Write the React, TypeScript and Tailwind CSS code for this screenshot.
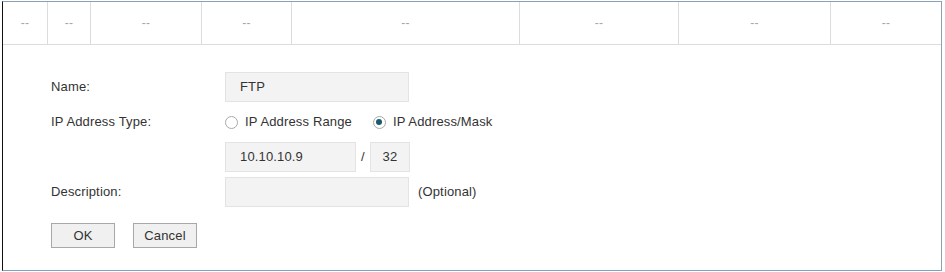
import React from 'react';

const columns = ['--', '--', '--', '--', '--', '--', '--', '--'];

function Radio({ checked, label }: { checked?: boolean; label: string }) {
  return (
    <label className="flex items-center">
      <span className="flex h-[13px] w-[13px] items-center justify-center rounded-full border border-[#a9a9a9] bg-white">
        {checked && <span className="h-[6px] w-[6px] rounded-full bg-[#1b5a6b]" />}
      </span>
      <span className="ml-[7px]">{label}</span>
    </label>
  );
}

export default function App() {
  return (
    <div className="h-[272px] w-[945px] bg-white pt-[1px] pl-[2px] text-[13px] tracking-[0.15px] text-[#333] [font-family:'Liberation_Sans',Arial,sans-serif]">
      <div className="w-[940px] border border-t-[#8ca1b5] border-r-[#8ca1b5] border-b-[#7ea3c2] border-l-[#111]">
        {/* header row */}
        <div className="grid h-[43px] grid-cols-[45px_43px_111px_90px_228px_159px_152px_1fr] border-b border-[#dcdcdc]">
          {columns.map((c, i) => (
            <div
              key={i}
              className={`flex items-center justify-center text-[12px] text-[#a6a6a6] ${i < columns.length - 1 ? 'border-r border-[#dcdcdc]' : ''}`}
            >
              {c}
            </div>
          ))}
        </div>

        {/* edit form */}
        <div className="flex flex-col pt-[27px] pb-[22px] pl-[48px]">
          <div className="flex h-[30px] items-center">
            <div className="w-[174px]">Name:</div>
            <div className="flex h-[30px] w-[184px] items-center border border-[#e3e3e3] bg-[#f3f3f3] pl-[14px]">FTP</div>
          </div>

          <div className="mt-[5px] flex h-[30px] items-center">
            <div className="w-[174px]">IP Address Type:</div>
            <Radio label="IP Address Range" />
            <div className="ml-[21px]">
              <Radio checked label="IP Address/Mask" />
            </div>
          </div>

          <div className="mt-[5px] flex h-[30px] items-center">
            <div className="w-[174px]" />
            <div className="flex h-[30px] w-[131px] items-center border border-[#e3e3e3] bg-[#f3f3f3] pl-[14px]">10.10.10.9</div>
            <div className="w-[14px] text-center">/</div>
            <div className="flex h-[30px] w-[40px] items-center justify-center border border-[#e3e3e3] bg-[#f3f3f3]">32</div>
          </div>

          <div className="mt-[5px] flex h-[30px] items-center">
            <div className="w-[174px]">Description:</div>
            <div className="h-[30px] w-[184px] border border-[#e3e3e3] bg-[#f3f3f3]" />
            <div className="ml-[9px]">(Optional)</div>
          </div>

          <div className="mt-[16px] flex items-center">
            <button className="h-[25px] w-[64px] border border-[#a8a8a8] bg-[#f0f0f0] text-[#333]">OK</button>
            <button className="ml-[18px] h-[25px] w-[64px] border border-[#a8a8a8] bg-[#f0f0f0] text-[#333]">Cancel</button>
          </div>
        </div>
      </div>
    </div>
  );
}
